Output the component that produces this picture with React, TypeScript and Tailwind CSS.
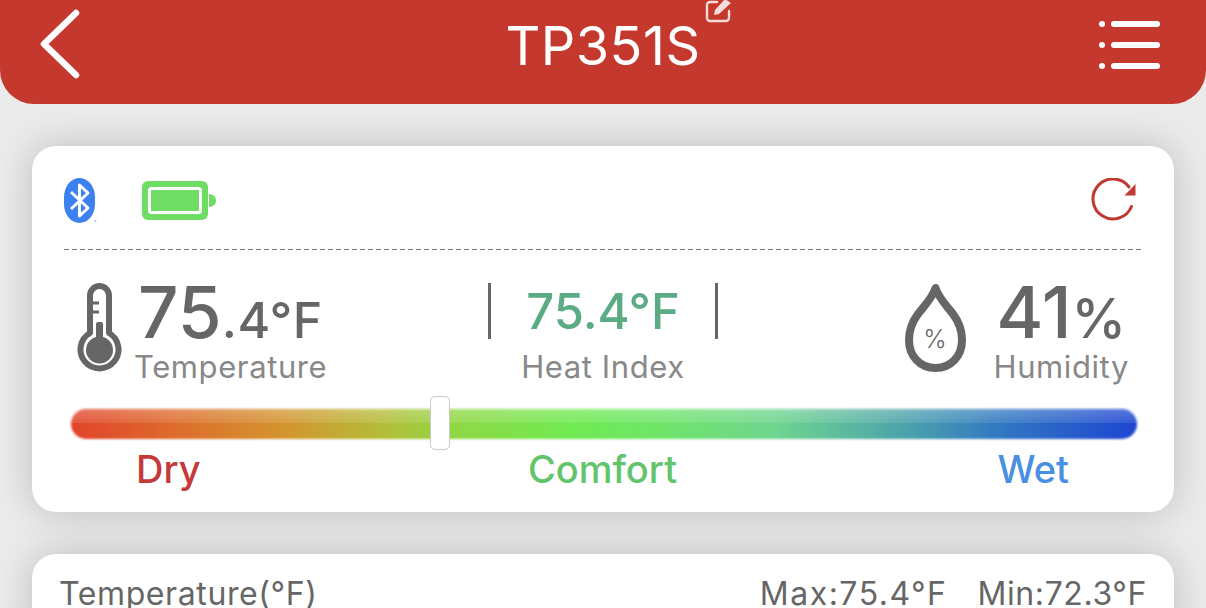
import React from 'react'

const fontStack = { fontFamily: 'Inter, "Noto Sans", sans-serif' }

function BackIcon() {
  return (
    <svg className="ml-[-5px]" width="40" height="70" viewBox="0 0 40 70" fill="none">
      <path d="M36 4 L4 35 L36 66" stroke="white" strokeWidth="6.5" strokeLinecap="round" strokeLinejoin="round" />
    </svg>
  )
}

function MenuIcon() {
  return (
    <svg width="62" height="50" viewBox="0 0 62 50" fill="white">
      {[5, 26, 47].map((y) => (
        <g key={y}>
          <circle cx="3" cy={y} r="3" />
          <rect x="12" y={y - 3} width="49" height="6" rx="3" />
        </g>
      ))}
    </svg>
  )
}

function EditIcon() {
  return (
    <svg className="absolute left-[calc(100%+4px)] top-[-20px]" width="28" height="26" viewBox="0 0 28 26" fill="none">
      <path d="M12 3 H5 a3 3 0 0 0-3 3 V19 a3 3 0 0 0 3 3 H21 a3 3 0 0 0 3-3 V12" stroke="#f6dcd8" strokeWidth="2.4" strokeLinecap="round" />
      <path d="M9 16 L10 11 L20 0 L26 4 L14 15 Z" fill="#f6dcd8" />
    </svg>
  )
}

function BluetoothIcon() {
  return (
    <svg width="34" height="46" viewBox="0 0 34 46" fill="none">
      <rect x="0" y="0" width="31" height="45" rx="15.5" ry="19" fill="#3b82f0" />
      <path d="M7 14 L24 30 L15.5 38 V7 L24 15 L7 31" stroke="white" strokeWidth="3" strokeLinejoin="round" />
      <circle cx="31.5" cy="43" r="0.9" fill="#8fb4ef" />
    </svg>
  )
}

function BatteryIcon() {
  return (
    <svg width="74" height="40" viewBox="0 0 74 40" fill="none">
      <rect x="0" y="0" width="66" height="39" rx="6" fill="#6fdc63" />
      <rect x="7.5" y="7.5" width="51" height="24" rx="2" fill="#6fdc63" stroke="white" strokeWidth="3" />
      <path d="M67 13 C72 13 74 17 74 19.5 C74 22 72 26 67 26 Z" fill="#6fdc63" />
    </svg>
  )
}

function RefreshIcon() {
  return (
    <svg width="46" height="46" viewBox="0 0 46 46" fill="none">
      <path d="M40.5 28.5 A20 20 0 1 1 38 9" stroke="#bf3a32" strokeWidth="3" strokeLinecap="round" />
      <path d="M44.5 6 V17.5 H33.5 Z" fill="#bf3a32" />
    </svg>
  )
}

function ThermometerIcon() {
  return (
    <svg width="46" height="90" viewBox="0 0 46 90" fill="none">
      <path
        d="M13 50 V12.5 a9.5 9.5 0 0 1 19 0 V50 a19 19 0 1 1-19 0 Z"
        stroke="#666666"
        strokeWidth="6"
        strokeLinejoin="round"
      />
      <circle cx="22.5" cy="67" r="13.5" fill="#666666" />
      <rect x="19" y="39" width="7" height="20" rx="2" fill="#666666" />
      <path d="M13 20 H22 M13 29 H22" stroke="#666666" strokeWidth="3" />
    </svg>
  )
}

function DropIcon() {
  return (
    <svg width="62" height="90" viewBox="0 0 62 90" fill="none">
      <path
        d="M30.5 5 C28 14 20 22 13 31 C7 39 4 48 4 57 C4 73 15 85 30.5 85 C46 85 57 73 57 57 C57 48 54 39 48 31 C41 22 33 14 30.5 5 Z"
        stroke="#666666"
        strokeWidth="8"
        strokeLinejoin="round"
      />
      <text x="30" y="65" textAnchor="middle" fill="#666666" fontSize="25" fontWeight="300" fontFamily="Inter, sans-serif">
        %
      </text>
    </svg>
  )
}

export default function App() {
  return (
    <div
      className="w-[1206px] h-[608px] overflow-hidden bg-[#ebebeb]"
      style={fontStack}
    >
      <header className="h-[104px] rounded-b-[34px] bg-[#c5382e] px-[45px] pb-[16px] grid grid-cols-[1fr_auto_1fr] items-center">
        <BackIcon />
        <h1 className="relative text-[54px] leading-none text-white tracking-[0.5px] mt-[4px]">
          TP351S
          <EditIcon />
        </h1>
        <div className="flex justify-end">
          <MenuIcon />
        </div>
      </header>

      <section className="mx-[32px] mt-[42px] h-[366px] rounded-[24px] bg-white shadow-[0_0_38px_rgba(0,0,0,0.2)] pl-[32px] pr-[33px] pt-[32px]">
        <div className="flex items-center justify-between h-[45px]">
          <div className="flex items-center gap-[44px]">
            <BluetoothIcon />
            <BatteryIcon />
          </div>
          <div className="mr-[4px]">
            <RefreshIcon />
          </div>
        </div>

        <div className="mt-[26px] h-px bg-[repeating-linear-gradient(90deg,#777777_0_5px,transparent_5px_8px)]" />

        <div className="mt-[33px] ml-[13px] mr-[12px] grid grid-cols-[1fr_auto_1fr] h-[90px] text-[#666666]">
          <div className="flex items-start">
            <ThermometerIcon />
            <div className="ml-[13px]">
              <div className="flex items-baseline h-[58px] pl-[2px] leading-none font-medium">
                <span className="text-[71px] leading-[58px]">75</span>
                <span className="text-[50px] leading-[58px] tracking-[0.5px]">.4°F</span>
              </div>
              <div className="mt-[8px] ml-[-2px] text-[31px] leading-[36px] text-[#888888] tracking-[0.6px]">Temperature</div>
            </div>
          </div>

          <div className="flex flex-col items-center">
            <div className="h-[56px] w-[230px] border-x-[3px] border-[#666666] flex items-center justify-center text-[#5bab85] text-[49px] leading-none font-medium">
              75.4°F
            </div>
            <div className="mt-[10px] text-[31px] leading-[36px] text-[#888888] tracking-[0.6px]">Heat Index</div>
          </div>

          <div className="flex items-start justify-end">
            <DropIcon />
            <div className="ml-[27px] flex flex-col items-center">
              <div className="flex items-baseline h-[58px] font-medium">
                <span className="text-[72px] leading-[58px]">41</span>
                <span className="text-[55px] leading-[58px]">%</span>
              </div>
              <div className="mt-[8px] text-[31px] leading-[36px] text-[#888888] tracking-[0.6px]">Humidity</div>
            </div>
          </div>
        </div>

        <div className="relative mt-[36px] ml-[7px] mr-[4px] h-[30px] rounded-full overflow-visible">
          <div className="h-full rounded-full blur-[0.8px] bg-[linear-gradient(90deg,#e2432b_0%,#dd6d2c_10%,#d3952f_20%,#b5bc39_29%,#8fd844_36%,#70ea52_47%,#6fe568_55%,#6fd58f_66%,#50a8a8_77%,#3279c2_87%,#1e45d2_100%)]" />
          <div className="absolute inset-x-0 top-0 h-[14px] rounded-t-full bg-gradient-to-b from-white/25 to-white/10" />
          <div className="absolute left-[359px] top-[-13px] w-[20px] h-[54px] rounded-[5px] bg-white border border-[#c8c8c8]" />
        </div>

        <div className="mt-[8px] mx-[72px] grid grid-cols-3 text-[38px] leading-[44px] font-medium">
          <span className="text-[#c43a3a]">Dry</span>
          <span className="text-center text-[#62c46c]">Comfort</span>
          <span className="text-right text-[#4a90e2]">Wet</span>
        </div>
      </section>

      <section className="mx-[32px] mt-[42px] h-[200px] rounded-[24px] bg-white shadow-[0_0_38px_rgba(0,0,0,0.2)] pl-[27px] pr-[27px] pt-[22px] flex items-start justify-between text-[32px] leading-[36px] text-[#666666]">
        <span className="tracking-[0.6px]">Temperature(°F)</span>
        <div className="flex gap-[30px]">
          <span className="tracking-[1.5px]">Max:75.4°F</span>
          <span className="tracking-[0.6px]">Min:72.3°F</span>
        </div>
      </section>
    </div>
  )
}
